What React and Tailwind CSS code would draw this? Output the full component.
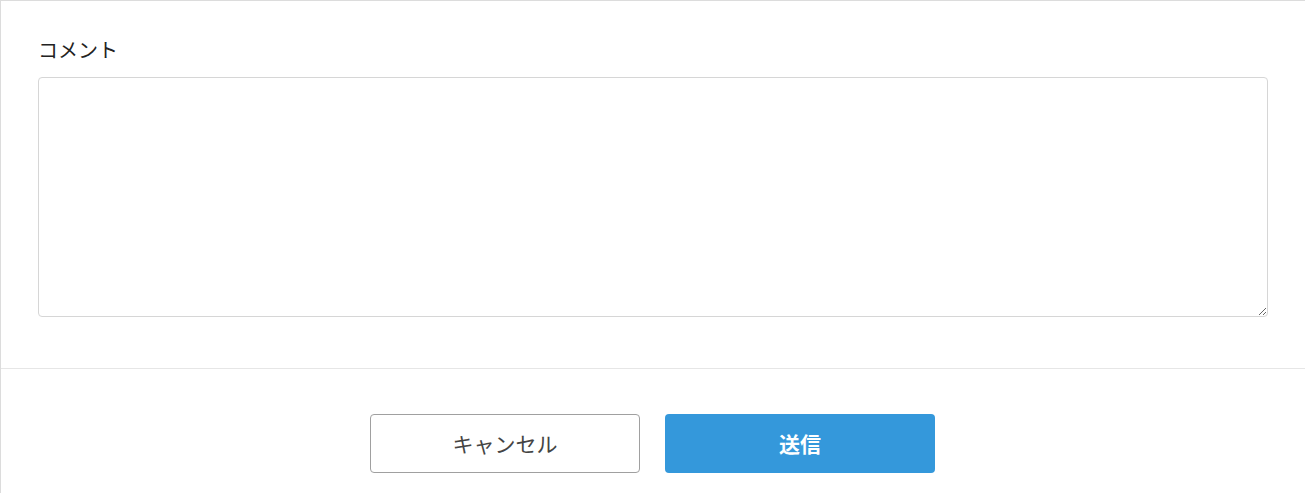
export default function App() {
  return (
    <div className="min-h-screen bg-white border-l border-t border-[#dcdcdc] font-['Noto_Sans_CJK_JP','Noto_Sans',sans-serif]">
      {/* コメント */}
      <div className="px-[37px] pt-[35px] pb-[51px] border-b border-[#e6e6e6]">
        <label className="block text-[20px] leading-[28px] font-normal text-[#222] mb-[13px]">コメント</label>
        <textarea className="block w-full h-[240px] border border-[#d6d6d6] rounded-[4px] p-2 text-[16px] outline-none" />
      </div>

      {/* ボタン */}
      <div className="flex justify-center gap-[25px] pt-[45px] pb-[20px] pr-px">
        <button className="w-[270px] h-[59px] border border-[#a0a0a0] rounded-[4px] bg-white text-[21px] font-normal text-[#444]">
          キャンセル
        </button>
        <button className="w-[270px] h-[59px] rounded-[4px] bg-[#3498db] text-[21px] font-bold text-white">
          送信
        </button>
      </div>
    </div>
  );
}
